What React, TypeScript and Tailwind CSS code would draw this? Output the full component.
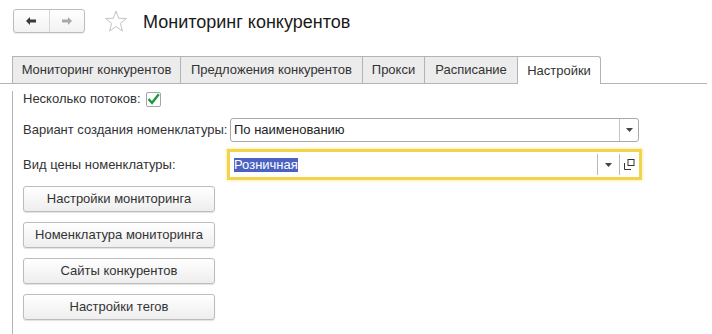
import React from "react";

const font = { fontFamily: '"Liberation Sans", Arial, sans-serif' };

function NavButtons() {
  return (
    <div className="flex h-[24px] w-[72px] rounded-[3px] border border-[#bdbdbd] bg-gradient-to-b from-white to-[#f2f2f2] shadow-[0_1px_1px_rgba(0,0,0,0.08)]">
      <div className="flex flex-1 items-center justify-center border-r border-[#d6d6d6]">
        <svg width="12" height="10" viewBox="0 0 12 10">
          <path d="M1 5 L5 1 L5 3.6 L11 3.6 L11 6.4 L5 6.4 L5 9 Z" fill="#3a3a3a" />
        </svg>
      </div>
      <div className="flex flex-1 items-center justify-center">
        <svg width="12" height="10" viewBox="0 0 12 10">
          <path d="M11 5 L7 1 L7 3.6 L1 3.6 L1 6.4 L7 6.4 L7 9 Z" fill="#a8a8a8" />
        </svg>
      </div>
    </div>
  );
}

function Star() {
  return (
    <svg width="24" height="23" viewBox="0 0 24 23">
      <path
        d="M12 1 L14.6 8.3 L22.5 8.5 L16.3 13.3 L18.5 21 L12 16.5 L5.5 21 L7.7 13.3 L1.5 8.5 L9.4 8.3 Z"
        fill="none"
        stroke="#c4c4c4"
        strokeWidth="1"
        strokeLinejoin="round"
      />
    </svg>
  );
}

const tabs = [
  { label: "Мониторинг конкурентов", w: "w-[168px]" },
  { label: "Предложения конкурентов", w: "w-[182px]" },
  { label: "Прокси", w: "w-[62px]" },
  { label: "Расписание", w: "w-[93px]" },
];

function Tabs() {
  return (
    <div className="flex h-[29px] items-end">
      <div className="w-[12px] self-stretch border-b border-[#b4b4b4]" />
      {tabs.map((t) => (
        <div
          key={t.label}
          className={`${t.w} flex h-[28px] items-center justify-center border-y border-l border-[#b4b4b4] bg-[#ececec] text-[13px] text-[#333]`}
        >
          {t.label}
        </div>
      ))}
      <div className="flex h-[28px] w-[84px] items-center justify-center rounded-tr-[3px] border-x border-t border-[#b4b4b4] bg-white text-[13px] text-[#333]">
        Настройки
      </div>
      <div className="w-[106px] self-stretch border-b border-[#b4b4b4]" />
    </div>
  );
}

function Arrow() {
  return (
    <svg width="7" height="4" viewBox="0 0 7 4">
      <path d="M0 0 L7 0 L3.5 4 Z" fill="#444" />
    </svg>
  );
}

function Btn({ children }: { children: React.ReactNode }) {
  return (
    <div className="flex h-[26px] w-[192px] items-center justify-center rounded-[3px] border border-[#bcbcbc] bg-gradient-to-b from-white to-[#eeeeee] text-[13px] text-[#333] shadow-[0_1px_1px_rgba(0,0,0,0.12)]">
      {children}
    </div>
  );
}

export default function App() {
  return (
    <div className="h-[334px] w-[712px] overflow-hidden bg-white" style={font}>
      <div className="flex h-[33px] items-center pl-[13px] pt-[9px]">
        <NavButtons />
        <div className="ml-[19px]">
          <Star />
        </div>
        <div className="ml-[15px] mt-[2px] text-[18px] leading-[24px] text-[#1a1a1a]">Мониторинг конкурентов</div>
      </div>
      <div className="mt-[22px]">
        <Tabs />
      </div>
      <div className="ml-[12px] h-[260px] border-l border-[#b4b4b4] pl-[10px]">
        <div className="mt-[7px] flex h-[16px] items-center text-[13px] text-[#333]">
          <span>Несколько потоков:</span>
          <div className="ml-[5px] flex h-[15px] w-[15px] items-center justify-center rounded-[2px] border border-[#a6a6a6] bg-white">
            <svg width="13" height="12" viewBox="0 0 13 12">
              <path d="M1.5 6 L5 9.8 L11.8 1.2" fill="none" stroke="#1e9b43" strokeWidth="2.4" />
            </svg>
          </div>
        </div>
        <div className="mt-[11px] flex h-[24px] items-center text-[13px] text-[#333]">
          <span className="w-[207px]">Вариант создания номенклатуры:</span>
          <div className="flex h-[24px] w-[409px] items-stretch rounded-[3px] border border-[#a9a9a9] bg-white">
            <div className="flex flex-1 items-center pl-[3px] text-[#222]">По наименованию</div>
            <div className="flex w-[19px] items-center justify-center border-l border-[#c4c4c4]">
              <Arrow />
            </div>
          </div>
        </div>
        <div className="mt-[7px] flex h-[31px] items-center text-[13px] text-[#333]">
          <span className="w-[204px]">Вид цены номенклатуры:</span>
          <div className="flex h-[31px] w-[415px] items-stretch border-[3px] border-[#f1d44a] bg-white shadow-[0_0_2px_1px_rgba(250,230,140,0.6)]">
            <div className="flex flex-1 items-center pl-[4px]">
              <span className="bg-[#4b62c3] leading-[14px] text-white">Розничная</span>
            </div>
            <div className="my-[2px] flex w-[22px] items-center justify-center border-l border-[#b9b9b9]">
              <Arrow />
            </div>
            <div className="my-[2px] flex w-[20px] items-center justify-center border-l border-[#b9b9b9]">
              <svg width="11" height="11" viewBox="0 0 11 11">
                <rect x="4" y="0.5" width="6" height="6" fill="none" stroke="#333" strokeWidth="1" />
                <path d="M0.5 4 L0.5 10.5 L7 10.5" fill="none" stroke="#333" strokeWidth="1" />
              </svg>
            </div>
          </div>
        </div>
        <div className="mt-[6px] flex flex-col gap-[10px]">
          <Btn>Настройки мониторинга</Btn>
          <Btn>Номенклатура мониторинга</Btn>
          <Btn>Сайты конкурентов</Btn>
          <Btn>Настройки тегов</Btn>
        </div>
      </div>
    </div>
  );
}
